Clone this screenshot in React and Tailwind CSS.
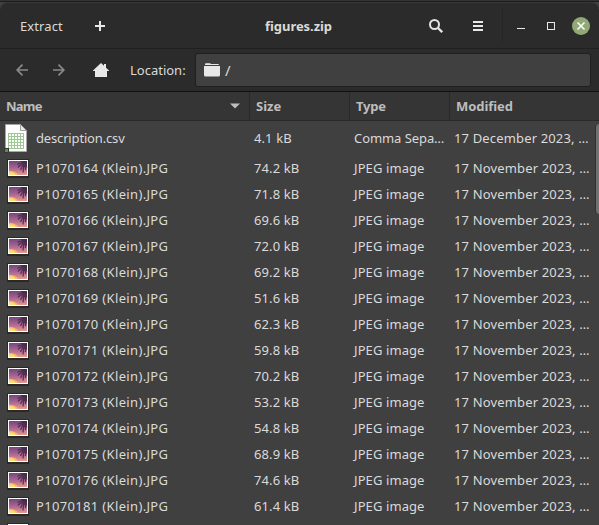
import React from 'react';

const files = [
  ['P1070164', '74.2 kB'],
  ['P1070165', '71.8 kB'],
  ['P1070166', '69.6 kB'],
  ['P1070167', '72.0 kB'],
  ['P1070168', '69.2 kB'],
  ['P1070169', '51.6 kB'],
  ['P1070170', '62.3 kB'],
  ['P1070171', '59.8 kB'],
  ['P1070172', '70.2 kB'],
  ['P1070173', '53.2 kB'],
  ['P1070174', '54.8 kB'],
  ['P1070175', '68.9 kB'],
  ['P1070176', '74.6 kB'],
  ['P1070181', '61.4 kB'],
];

function Sheet() {
  return (
    <svg width="24" height="30" viewBox="0 0 24 30" className="shrink-0">
      <path d="M1.5 1.5H16.5L22.5 7.5V28.5H1.5Z" fill="#fff" stroke="#a6a6a6" />
      <path d="M16.5 1.5V7.5H22.5Z" fill="#e8e8e8" stroke="#a0a0a0" />
      <path d="M4 10.5H20M4 13.5H20M4 16.5H20M4 19.5H20M4 22.5H20M4 25.5H20M4.500 10V26M7.500 10V26M10.500 10V26M13.500 10V26M16.500 10V26M19.500 10V26" stroke="#9cc992" fill="none" />
      <rect x="0" y="25" width="5" height="5" fill="#353535" />
      <rect x="1" y="26" width="3" height="3" fill="#4a9a32" />
    </svg>
  );
}

function Thumb() {
  return (
    <svg width="22" height="20" viewBox="0 0 22 20" className="shrink-0">
      <defs>
        <linearGradient id="dusk" x1="0" y1="0" x2="0" y2="1">
          <stop offset="0" stopColor="#76457e" />
          <stop offset=".5" stopColor="#a96590" />
          <stop offset="1" stopColor="#e69a8c" />
        </linearGradient>
      </defs>
      <rect width="22" height="19" y="1" rx=".5" fill="#292929" />
      <rect x="1" y="2" width="20" height="16" fill="#fff" />
      <rect x="2" y="3" width="18" height="14" fill="url(#dusk)" />
      <path d="M2 13Q8 12.500 11.500 17H2Z" fill="#f6b877" />
      <path d="M2 14.500Q6 13.500 9 17H2Z" fill="#fbe070" />
      <path d="M13 3H20V9" fill="#482a49" />
      <path d="M17.500 6Q13.500 4 10.500 6.500M17.500 6.500Q13.500 6 11 9.500M17.500 6.500Q14.500 8 13.500 12M17.500 6.500Q16 10 16 14.500M17.500 6.500Q19 9 18.500 12M17.500 6Q19.500 7 19.800 9.500" fill="none" stroke="#50304f" strokeWidth="1.200" />
    </svg>
  );
}

function Row({ icon, name, size, type, date, tall }) {
  return (
    <div className={`flex shrink-0 items-center whitespace-nowrap ${tall ? 'h-[34px]' : 'h-[26px]'}`}>
      <div className="flex w-9 shrink-0 items-center">
        <span className={tall ? 'ml-1' : 'ml-[7px]'}>{icon}</span>
      </div>
      <span className={`w-[218px] shrink-0 ${tall ? 'tracking-[-0.16px]' : 'tracking-[0.34px]'}`}>{name}</span>
      <span className="w-[100px] shrink-0 tracking-[0.1px]">{size}</span>
      <span className={`w-[100px] shrink-0 ${tall ? 'tracking-[-0.07px]' : 'tracking-[0.09px]'}`}>{type}</span>
      <span className="tracking-[0.15px]">{date}</span>
    </div>
  );
}

export default function App() {
  return (
    <div className="flex h-[525px] w-[599px] flex-col overflow-hidden bg-[#404040] font-['Noto_Sans',sans-serif] text-[13px] leading-[18px] text-[#dadada]">
      <div className="h-[2px] shrink-0 border-b border-[#1c1c1c] bg-[#343434]" />
      <header className="flex h-[47px] shrink-0 items-center rounded-t-lg border-t border-b border-t-[#383838] border-b-[#202020] bg-[#2b2b2b] whitespace-nowrap">
        <span className="ml-5 w-[75px] tracking-[0.1px]">Extract</span>
        <svg width="10" height="10" viewBox="0 0 10 10" className="shrink-0"><path d="M5 0V10M0 5H10" stroke="#e8e8e8" strokeWidth="2" /></svg>
        <span className="ml-[160px] w-[164px] shrink-0 font-bold tracking-[-0.05px]">figures.zip</span>
        <svg width="14" height="14" viewBox="0 0 14 14" fill="none" stroke="#e4e4e4" className="shrink-0"><circle cx="5.500" cy="5.500" r="4.500" strokeWidth="2" /><path d="M9 9L13.200 13.200" strokeWidth="2.300" /></svg>
        <svg width="10" height="10" viewBox="0 0 10 10" className="ml-[30px] shrink-0"><path d="M0 1H10M0 5H10M0 9H10" stroke="#e8e8e8" strokeWidth="2" /></svg>
        <span className="ml-[19px] h-[33px] w-px bg-[#252525]" />
        <svg width="8" height="9" viewBox="0 0 8 9" className="ml-[14px] shrink-0"><path d="M0 7.500H8" stroke="#e8e8e8" /></svg>
        <svg width="8" height="8" viewBox="0 0 8 8" className="ml-[22px] shrink-0"><rect x=".5" y=".5" width="7" height="7" fill="none" stroke="#e8e8e8" /></svg>
        <svg width="18" height="18" viewBox="0 0 18 18" className="ml-[17px] shrink-0"><circle cx="9" cy="9" r="9" fill="#92a876" /><path d="M5.500 5.500L12.500 12.500M12.500 5.500L5.500 12.500" stroke="#fff" strokeWidth="1.500" /></svg>
      </header>
      <nav className="flex h-[43px] shrink-0 items-center border-b border-[#111] bg-[#2b2b2b]">
        <svg width="12" height="12" viewBox="0 0 12 12" fill="none" stroke="#898989" strokeWidth="1.700" className="ml-4 shrink-0"><path d="M12 6H1M6.500 .7L1.200 6L6.500 11.300" /></svg>
        <svg width="12" height="12" viewBox="0 0 12 12" fill="none" stroke="#898989" strokeWidth="1.700" className="ml-[25px] shrink-0"><path d="M0 6H11M5.500 .7L10.800 6L5.500 11.300" /></svg>
        <svg width="16" height="14" viewBox="0 0 16 14" className="ml-7 shrink-0"><path d="M8 0L11 2.800V1H13V4.700L16 7.500V8H14V14H2V8H0V7.500Z" fill="#e8e8e8" /></svg>
        <span className="ml-[21px] w-[65px] shrink-0">Location:</span>
        <div className="flex h-[34px] w-[396px] shrink-0 items-center rounded-[3px] border border-[#1f1f1f] bg-[#404040] pl-2">
          <svg width="16" height="14" viewBox="0 0 16 14" className="shrink-0"><path d="M1 2V1.500Q1 .3 2 .3H6L7 1H14Q15 1 15 2Z" fill="#e8e8e8" /><path d="M0 3H16V12Q16 13.500 14.500 13.500H1.500Q0 13.500 0 12Z" fill="#e8e8e8" /></svg>
          <span className="ml-[5px] text-[15px]">/</span>
        </div>
      </nav>
      <div className="flex h-[29px] shrink-0 items-stretch border-b border-[#292929] bg-[#353535] font-bold text-[#bdbdbd]">
        <div className="flex w-[250px] items-center justify-between border-r border-[#292929] pr-[9px] pl-1.5">
          <span className="tracking-[-0.8px]">Name</span>
          <svg width="10" height="6" viewBox="0 0 10 6"><path d="M0 .5H10L5 5.500Z" fill="#bdbdbd" /></svg>
        </div>
        <div className="flex w-[100px] items-center border-r border-[#292929] pl-1.5">Size</div>
        <div className="flex w-[100px] items-center border-r border-[#292929] pl-1.5 tracking-[-0.2px]">Type</div>
        <div className="flex items-center pl-1.5 tracking-[-0.07px]">Modified</div>
      </div>
      <main className="flex min-h-0 flex-1 overflow-hidden">
        <div className="flex w-[595px] shrink-0 flex-col overflow-hidden">
          <Row tall icon={<Sheet />} name="description.csv" size="4.1 kB" type="Comma Sepa…" date="17 December 2023, …" />
          {files.map(([name, size]) => (
            <Row key={name} icon={<Thumb />} name={`${name} (Klein).JPG`} size={size} type="JPEG image" date="17 November 2023, …" />
          ))}
          <Row icon={<Thumb />} />
        </div>
        <div className="mt-[3px] h-[90px] w-1 shrink-0 rounded-l-sm border-l border-[#303030] bg-[#727272]" />
      </main>
    </div>
  );
}
